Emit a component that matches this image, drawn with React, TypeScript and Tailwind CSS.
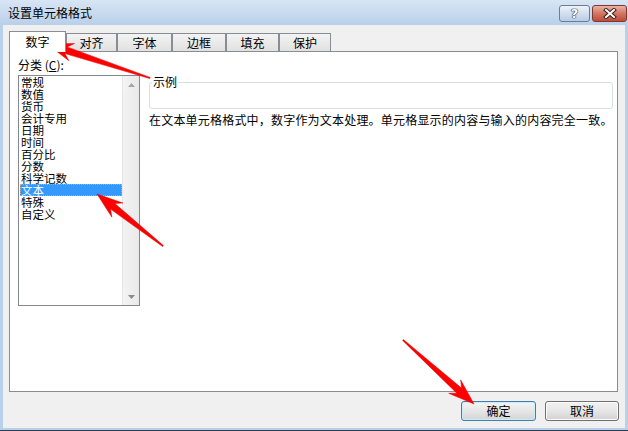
import React from 'react';

function arrowPoints(tx: number, ty: number, sx: number, sy: number, L = 26, hw = 9, sw = 3.5) {
  const dx = sx - tx;
  const dy = sy - ty;
  const len = Math.sqrt(dx * dx + dy * dy);
  const ux = dx / len;
  const uy = dy / len;
  const nx = -uy;
  const ny = ux;
  const p = (a: number, b: number) => `${a.toFixed(1)},${b.toFixed(1)}`;
  const pts = [
    p(tx, ty),
    p(tx + ux * L + nx * hw, ty + uy * L + ny * hw),
    p(tx + ux * (L - 6) + nx * sw, ty + uy * (L - 6) + ny * sw),
    p(sx + nx * 0.6, sy + ny * 0.6),
    p(sx - nx * 0.6, sy - ny * 0.6),
    p(tx + ux * (L - 6) - nx * sw, ty + uy * (L - 6) - ny * sw),
    p(tx + ux * L - nx * hw, ty + uy * L - ny * hw),
  ];
  return pts.join(' ');
}

const items = ['常规', '数值', '货币', '会计专用', '日期', '时间', '百分比', '分数', '科学记数', '文本', '特殊', '自定义'];

const tabs = [
  { t: '数字', w: 'w-[57px]', active: true },
  { t: '对齐', w: 'w-[51px]' },
  { t: '字体', w: 'w-[55px]' },
  { t: '边框', w: 'w-[54px]' },
  { t: '填充', w: 'w-[53px]' },
  { t: '保护', w: 'w-[52px]' },
];

export default function App() {
  return (
    <div className="relative w-[628px] h-[431px] overflow-hidden bg-[#b9d0ea] border-b border-[#2c3e55] font-['Noto_Sans_CJK_SC','Liberation_Sans',sans-serif] text-black">
      {/* Title bar */}
      <div className="h-[25px] flex items-start bg-gradient-to-b from-[#d8e5f4] to-[#b9d0ea]">
        <span className="ml-[8px] mt-[6px] text-[12px] leading-[14px]">设置单元格格式</span>
        <div className="ml-auto mt-[5px] mr-[1px] flex gap-[2px]">
          <div className="w-[31px] h-[17px] rounded-[3px] border border-[#6b7c96] bg-gradient-to-b from-[#eef3fa] via-[#d3dfee] to-[#b9cce4] flex items-center justify-center">
            <span className="text-[13px] leading-[13px] font-bold text-white [text-shadow:0_0_1px_#1e2c40,0_0_1px_#1e2c40,0_0_1px_#1e2c40] font-['DejaVu_Sans',sans-serif]">?</span>
          </div>
          <div className="w-[35px] h-[17px] rounded-[3px] border border-[#7a3a32] bg-gradient-to-b from-[#eab1a6] via-[#d27562] to-[#c04a36] flex items-center justify-center">
            <svg width="14" height="11" viewBox="0 0 14 11">
              <path d="M3 2 L11 9 M11 2 L3 9" stroke="#3a1f1a" strokeWidth="4" strokeLinecap="square" />
              <path d="M3 2 L11 9 M11 2 L3 9" stroke="#ffffff" strokeWidth="2" strokeLinecap="square" />
            </svg>
          </div>
        </div>
      </div>

      {/* Body */}
      <div className="mx-[3px] h-[403px] bg-[#f0f0f0] flex flex-col">
        {/* Tabs */}
        <div className="flex items-end pl-[6px] pt-[6px] text-[12px]">
          {tabs.map((tab) =>
            tab.active ? (
              <div
                key={tab.t}
                className={`${tab.w} h-[21px] -mb-px relative z-10 bg-white border border-b-0 border-[#898c95] flex items-center justify-center leading-[14px]`}
              >
                {tab.t}
              </div>
            ) : (
              <div
                key={tab.t}
                className={`${tab.w} h-[18px] bg-gradient-to-b from-[#f3f3f3] to-[#e1e1e1] border border-b-0 border-[#898c95] flex items-center justify-center leading-[14px] pt-[1px]`}
              >
                {tab.t}
              </div>
            )
          )}
        </div>

        {/* Panel */}
        <div className="ml-[6px] w-[609px] h-[341px] bg-white border border-[#898c95] flex text-[12px]">
          {/* Left column */}
          <div className="ml-[8px] pt-[6px] flex flex-col">
            <div className="leading-[14px] h-[14px] mb-[3px]">
              分类 (<span className="underline">C</span>):
            </div>
            <div className="w-[122px] h-[231px] border border-[#828790] flex">
              <div className="flex-1 flex flex-col text-[11.5px]">
                {items.map((it) =>
                  it === '文本' ? (
                    <div
                      key={it}
                      className="h-[12px] ml-[1px] leading-[12px] bg-[#3399ff] text-white pl-[1px] outline-1 outline-dotted outline-[#e8a060] -outline-offset-1"
                    >
                      {it}
                    </div>
                  ) : (
                    <div key={it} className="h-[12px] ml-[1px] leading-[12px] pl-[1px]">
                      {it}
                    </div>
                  )
                )}
              </div>
              <div className="w-[17px] bg-[#f0f0f0] border-l border-[#e6e6e6] flex flex-col">
                <div className="h-[17px] flex items-center justify-center bg-gradient-to-r from-[#f4f4f4] to-[#e9e9e9]">
                  <svg width="7" height="4" viewBox="0 0 7 4">
                    <path d="M0 4 L3.5 0 L7 4 Z" fill="#a6a6a6" />
                  </svg>
                </div>
                <div className="flex-1 bg-gradient-to-r from-[#f2f2f2] to-[#eaeaea]" />
                <div className="h-[17px] flex items-center justify-center bg-gradient-to-r from-[#f4f4f4] to-[#e9e9e9]">
                  <svg width="7" height="4" viewBox="0 0 7 4">
                    <path d="M0 0 L3.5 4 L7 0 Z" fill="#8a8a8a" />
                  </svg>
                </div>
              </div>
            </div>
          </div>

          {/* Right column */}
          <div className="ml-[9px] mr-[7px] mt-[22px] flex-1 flex flex-col">
            <fieldset className="h-[35px] border border-[#d5dfe5] rounded-[3px]">
              <legend className="ml-[2px] px-[1px] leading-[16px] text-[12px]">示例</legend>
            </fieldset>
            <div className="mt-[3px] leading-[16px] tracking-[0.2px] whitespace-nowrap">
              在文本单元格格式中，数字作为文本处理。单元格显示的内容与输入的内容完全一致。
            </div>
          </div>
        </div>

        {/* Buttons */}
        <div className="mt-[9px] flex justify-end gap-[9px] pr-[6px] text-[12px]">
          <div className="w-[75px] h-[20px] rounded-[3px] border border-[#3c7fb1] bg-gradient-to-b from-[#f4f4f4] via-[#e6e6e6] to-[#d4d4d4] shadow-[inset_0_0_0_1px_#cfeaf8] flex items-center justify-center leading-[14px]">
            确定
          </div>
          <div className="w-[74px] h-[20px] rounded-[3px] border border-[#707070] bg-gradient-to-b from-[#f2f2f2] via-[#e6e6e6] to-[#d2d2d2] shadow-[inset_0_0_0_1px_#fbfbfb] flex items-center justify-center leading-[14px]">
            取消
          </div>
        </div>
      </div>

      {/* Red annotation arrows */}
      <svg className="absolute left-0 top-0 pointer-events-none" width="628" height="431" viewBox="0 0 628 431">
        <polygon points={arrowPoints(47, 44, 150, 78)} fill="#ff0000" stroke="#e00000" strokeWidth="0.5" />
        <polygon points={arrowPoints(97, 194, 163, 246)} fill="#ff0000" stroke="#e00000" strokeWidth="0.5" />
        <polygon points={arrowPoints(474, 404, 403, 340)} fill="#ff0000" stroke="#e00000" strokeWidth="0.5" />
      </svg>
    </div>
  );
}
